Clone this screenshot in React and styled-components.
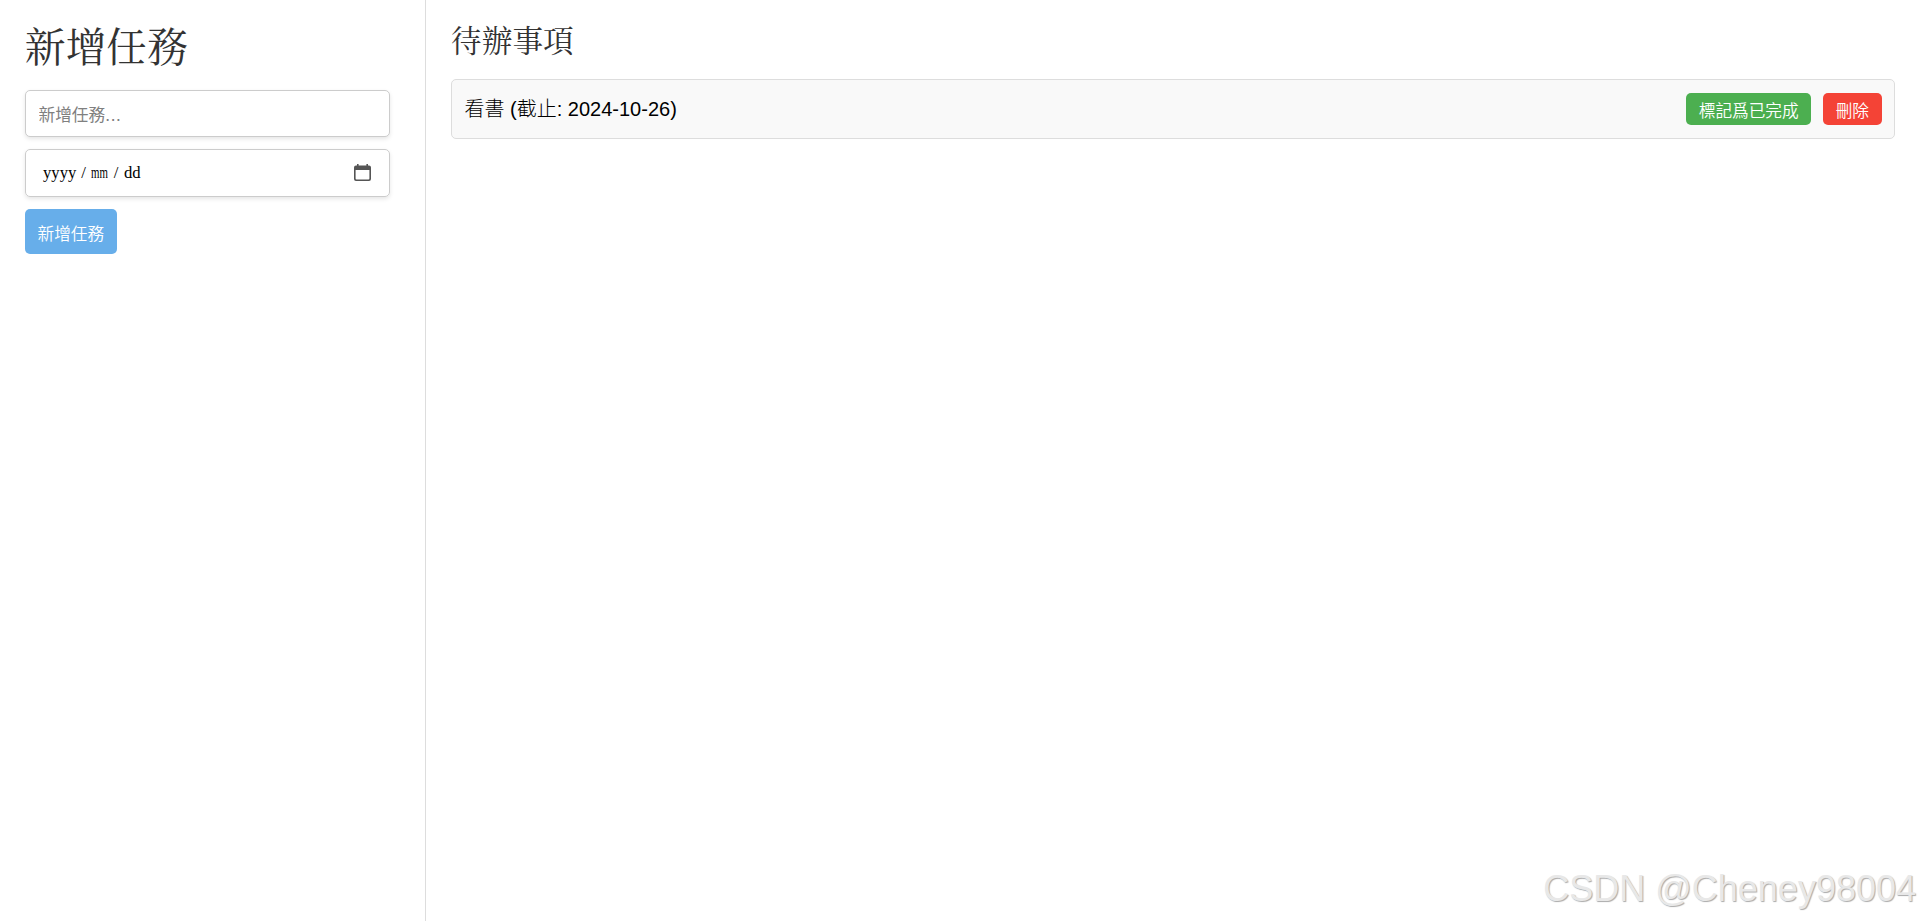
import React from 'react';
import styled, { createGlobalStyle } from 'styled-components';

const GlobalStyle = createGlobalStyle`
    body {
        margin: 0;
        background-color: #fff;
        font-family: "Liberation Sans", "Noto Sans CJK TC", sans-serif;
        overflow: hidden;
    }

    * {
        box-sizing: border-box;
    }
`

const ContainerApp = styled.div`
    display: flex;
    height: 100vh;
`

const Sidebar = styled.div`
    width: 426px;
    flex: none;
    padding: 25px 35px 25px 25px;
    border-right: 1px solid #ddd;
`

const Main = styled.div`
    flex: 1;
    padding: 25px;
`

const Title = styled.h1`
    margin: 0 0 25px;
    color: #333;
    font-family: "Noto Serif CJK TC", "Noto Sans CJK TC", serif;
    font-size: 40.67px;
    font-weight: 400;
    line-height: 40px;
`

const Subtitle = styled.h2`
    margin: 0 0 26px;
    color: #333;
    font-family: "Noto Serif CJK TC", "Noto Sans CJK TC", serif;
    font-size: 30.7px;
    font-weight: 400;
    line-height: 28px;
`

const Form = styled.div`
    display: flex;
    flex-direction: column;
    align-items: flex-start;
    gap: 12px;
`

const TaskInput = styled.input`
    width: 365px;
    height: 47px;
    padding: 3px 12.5px 0;
    border: 1px solid #ccc;
    border-radius: 5px;
    outline: none;
    box-shadow: 0 2px 4px rgba(0, 0, 0, 0.1);
    font-family: "DejaVu Sans", "Noto Sans CJK TC", sans-serif;
    font-size: 16.67px;
    font-weight: 400;

    &::placeholder {
        color: #808080;
    }
`

const DateInput = styled.div`
    display: flex;
    align-items: center;
    justify-content: space-between;
    width: 365px;
    height: 48px;
    padding: 0 18px 0 17px;
    border: 1px solid #ccc;
    border-radius: 5px;
    box-shadow: 0 2px 4px rgba(0, 0, 0, 0.1);
    font-family: "Liberation Serif", serif;
    font-size: 16.67px;

    > div {
        display: flex;
    }

    > svg {
        margin-bottom: 2px;
    }
`

const DatePart = styled.span`
    width: ${props => props.$width}px;
    text-align: ${props => props.$align || 'left'};
    transform: scaleX(${props => props.$scale || 1});
    transform-origin: left;
`

const Button = styled.button`
    height: ${props => props.$large ? 45 : 32}px;
    padding: ${props => props.$large ? 3 : 2}px 12.5px 0;
    border: none;
    border-radius: 5px;
    background-color: ${props => props.$color};
    color: #fff;
    font-family: "Noto Sans CJK TC", sans-serif;
    font-size: 16.67px;
    font-weight: 350;
    line-height: 24px;
    cursor: pointer;
`

const TaskItem = styled.div`
    display: flex;
    align-items: center;
    justify-content: space-between;
    height: 60px;
    padding: 0 12.5px;
    border: 1px solid #ddd;
    border-radius: 5px;
    background-color: #f9f9f9;
`

const TaskText = styled.span`
    padding-bottom: 1px;
    font-size: 20px;
    font-weight: 300;
    line-height: 28px;
    color: #000;
`

const Actions = styled.div`
    display: flex;
    gap: 12px;
`

const Watermark = styled.div`
    position: absolute;
    right: 4px;
    bottom: 11px;
    color: #e8e8e8;
    font-size: 36px;
    line-height: 42px;
    white-space: nowrap;
    text-shadow: 1px 1px 1px #aaa;
`

const CalendarIcon = () => (
    <svg width="17" height="17" viewBox="0 0 17 17">
        <path
            fill="#555"
            fillRule="evenodd"
            d="M3 0h1.6v1.4h7.8V0H14v1.4h1A2 2 0 0 1 17 3.4V15a2 2 0 0 1-2 2H2a2 2 0 0 1-2-2V3.4a2 2 0 0 1 2-2h1zM1.6 6v8.4a1 1 0 0 0 1 1h11.8a1 1 0 0 0 1-1V6z"
        />
    </svg>
)

class App extends React.Component {
    state = {
        tarefas: [{ nome: '看書', prazo: '2024-10-26' }],
        novaTarefa: ''
    }

    onChangeTarefa = (event) => {
        this.setState({ novaTarefa: event.target.value })
    }

    aoAdicionar = () => {
        if (this.state.novaTarefa === '') {
            return
        }
        const tarefa = { nome: this.state.novaTarefa, prazo: '2024-10-26' }
        this.setState({ tarefas: [...this.state.tarefas, tarefa], novaTarefa: '' })
    }

    aoRemover = (posicao) => {
        this.setState({ tarefas: this.state.tarefas.filter((tarefa, index) => index !== posicao) })
    }

    render() {
        const listaTarefas = this.state.tarefas.map((tarefa, index) => {
            return (
                <TaskItem key={index}>
                    <TaskText>{tarefa.nome} (截止: {tarefa.prazo})</TaskText>
                    <Actions>
                        <Button $color="#4caf50">標記爲已完成</Button>
                        <Button $color="#f44336" onClick={() => this.aoRemover(index)}>刪除</Button>
                    </Actions>
                </TaskItem>
            )
        })

        return (
            <ContainerApp>
                <GlobalStyle />
                <Sidebar>
                    <Title>新增任務</Title>
                    <Form>
                        <TaskInput
                            value={this.state.novaTarefa}
                            placeholder="新增任務..."
                            onChange={this.onChangeTarefa}
                        />
                        <DateInput>
                            <div>
                                <DatePart $width={33}>yyyy</DatePart>
                                <DatePart $width={15} $align="center">/</DatePart>
                                <DatePart $width={17} $scale={0.65}>mm</DatePart>
                                <DatePart $width={16} $align="center">/</DatePart>
                                <DatePart $width={17}>dd</DatePart>
                            </div>
                            <CalendarIcon />
                        </DateInput>
                        <Button $large $color="#67aeea" onClick={this.aoAdicionar}>新增任務</Button>
                    </Form>
                </Sidebar>
                <Main>
                    <Subtitle>待辦事項</Subtitle>
                    {listaTarefas}
                </Main>
                <Watermark>CSDN @Cheney98004</Watermark>
            </ContainerApp>
        )
    }
}

export default App
